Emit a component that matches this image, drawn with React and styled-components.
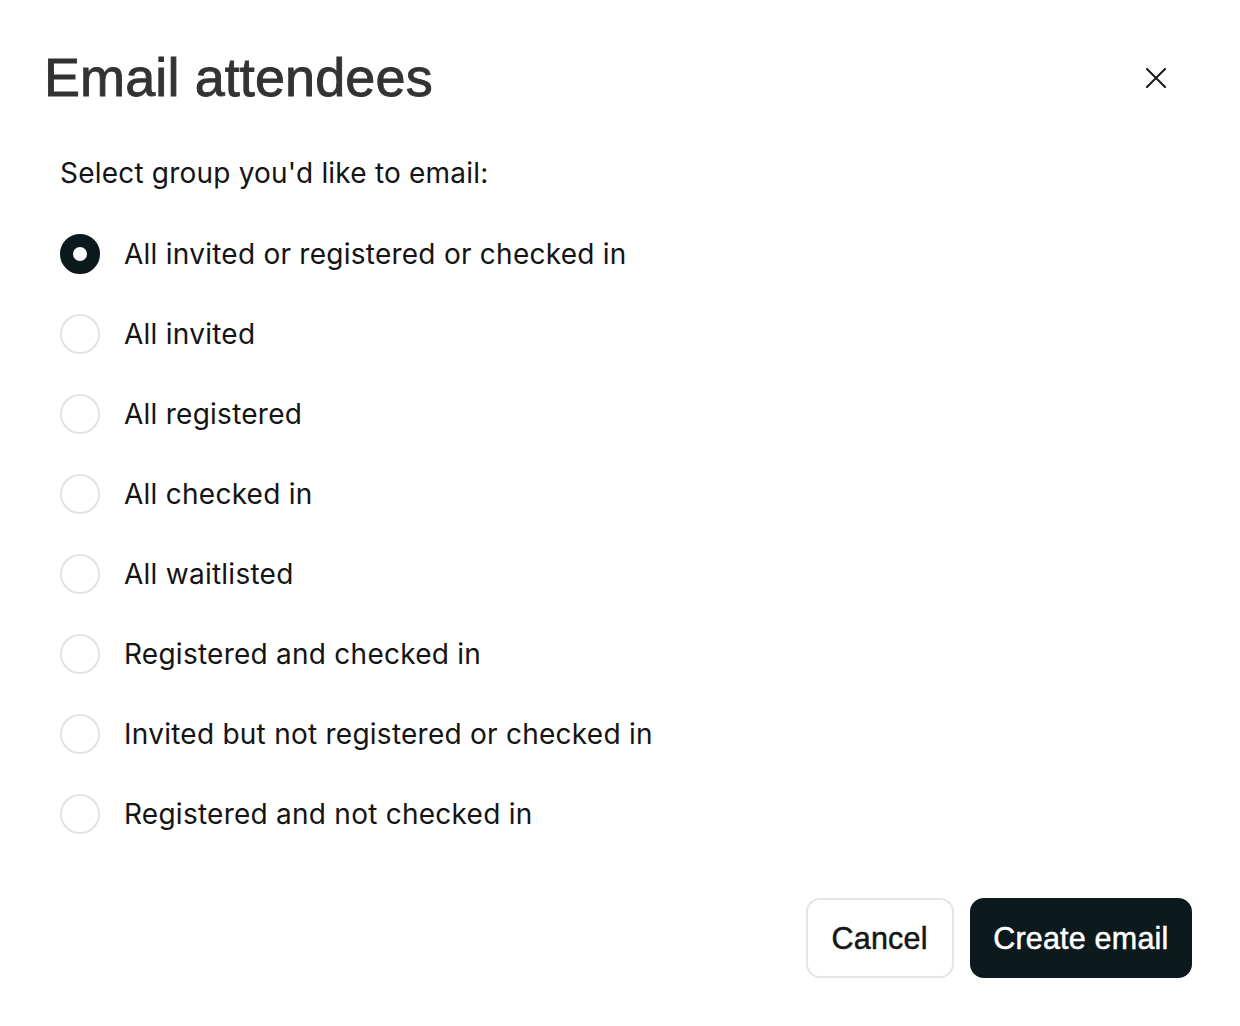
import React, { useState } from "react";
import styled, { createGlobalStyle } from "styled-components";

const Global = createGlobalStyle`
  html, body { margin: 0; padding: 0; background: #fff; }
  body { font-family: Inter, "Liberation Sans", sans-serif; }
  * { box-sizing: border-box; }
`;

const Dialog = styled.div`
  width: 1240px;
  height: 1026px;
  padding: 45px 48px 0 44px;
  display: flex;
  flex-direction: column;
`;

const Header = styled.div`
  display: flex;
  align-items: flex-start;
  justify-content: space-between;
`;

const Title = styled.h1`
  margin: 0;
  font-family: "Liberation Sans", Arial, sans-serif;
  font-weight: 400;
  font-size: 54px;
  line-height: 64px;
  letter-spacing: 0.1px;
  color: #333;
  -webkit-text-stroke: 0.9px #333;
`;

const CloseButton = styled.button`
  width: 40px;
  height: 40px;
  margin-top: 13px;
  margin-right: 16px;
  padding: 0;
  border: none;
  background: transparent;
  display: flex;
  align-items: center;
  justify-content: center;
  cursor: pointer;
`;

const Body = styled.div`
  padding-left: 16px;
  margin-top: 46px;
  display: flex;
  flex-direction: column;
`;

const Prompt = styled.p`
  margin: 0;
  font-family: Inter, sans-serif;
  font-size: 28px;
  line-height: 36px;
  letter-spacing: 0.2px;
  color: #141414;
`;

const Options = styled.div`
  margin-top: 43px;
  display: flex;
  flex-direction: column;
  gap: 40px;
`;

const Option = styled.label`
  display: flex;
  align-items: center;
  gap: 24px;
  height: 40px;
  cursor: pointer;
`;

const Radio = styled.span`
  width: 40px;
  height: 40px;
  border-radius: 50%;
  flex: none;
  display: flex;
  align-items: center;
  justify-content: center;
  background: ${(p) => (p.$checked ? "#0c1a1e" : "#fff")};
  border: 2px solid ${(p) => (p.$checked ? "#0c1a1e" : "#e3e3e3")};
  &::after {
    content: "";
    width: 14px;
    height: 14px;
    border-radius: 50%;
    background: #fff;
    display: ${(p) => (p.$checked ? "block" : "none")};
  }
`;

const OptionText = styled.span`
  font-family: Inter, sans-serif;
  font-size: 28px;
  line-height: 36px;
  letter-spacing: 0.25px;
  color: #141414;
`;

const Footer = styled.div`
  margin-top: 64px;
  display: flex;
  justify-content: flex-end;
  gap: 16px;
`;

const Button = styled.button`
  height: 80px;
  padding: 0 ${(p) => (p.$primary ? "21.5px" : "24px")};
  border-radius: 14px;
  font-family: "Liberation Sans", Arial, sans-serif;
  font-size: 30.5px;
  font-weight: 400;
  letter-spacing: 0.2px;
  -webkit-text-stroke: 0.5px ${(p) => (p.$primary ? "#fff" : "#161616")};
  color: ${(p) => (p.$primary ? "#fff" : "#161616")};
  background: ${(p) => (p.$primary ? "#0c1a1e" : "#fff")};
  border: 2px solid ${(p) => (p.$primary ? "#0c1a1e" : "#e5e5e5")};
  cursor: pointer;
`;

const options = [
  "All invited or registered or checked in",
  "All invited",
  "All registered",
  "All checked in",
  "All waitlisted",
  "Registered and checked in",
  "Invited but not registered or checked in",
  "Registered and not checked in",
];

export default function App() {
  const [selected, setSelected] = useState(0);
  return (
    <>
      <Global />
      <Dialog>
        <Header>
          <Title>Email attendees</Title>
          <CloseButton aria-label="Close">
            <svg width="20" height="20" viewBox="0 0 20 20" fill="none">
              <path d="M1 1L19 19M19 1L1 19" stroke="#1a1a1a" strokeWidth="2" strokeLinecap="round" />
            </svg>
          </CloseButton>
        </Header>
        <Body>
          <Prompt>Select group you'd like to email:</Prompt>
          <Options>
            {options.map((o, i) => (
              <Option key={o} onClick={() => setSelected(i)}>
                <Radio $checked={selected === i} />
                <OptionText>{o}</OptionText>
              </Option>
            ))}
          </Options>
        </Body>
        <Footer>
          <Button>Cancel</Button>
          <Button $primary>Create email</Button>
        </Footer>
      </Dialog>
    </>
  );
}
